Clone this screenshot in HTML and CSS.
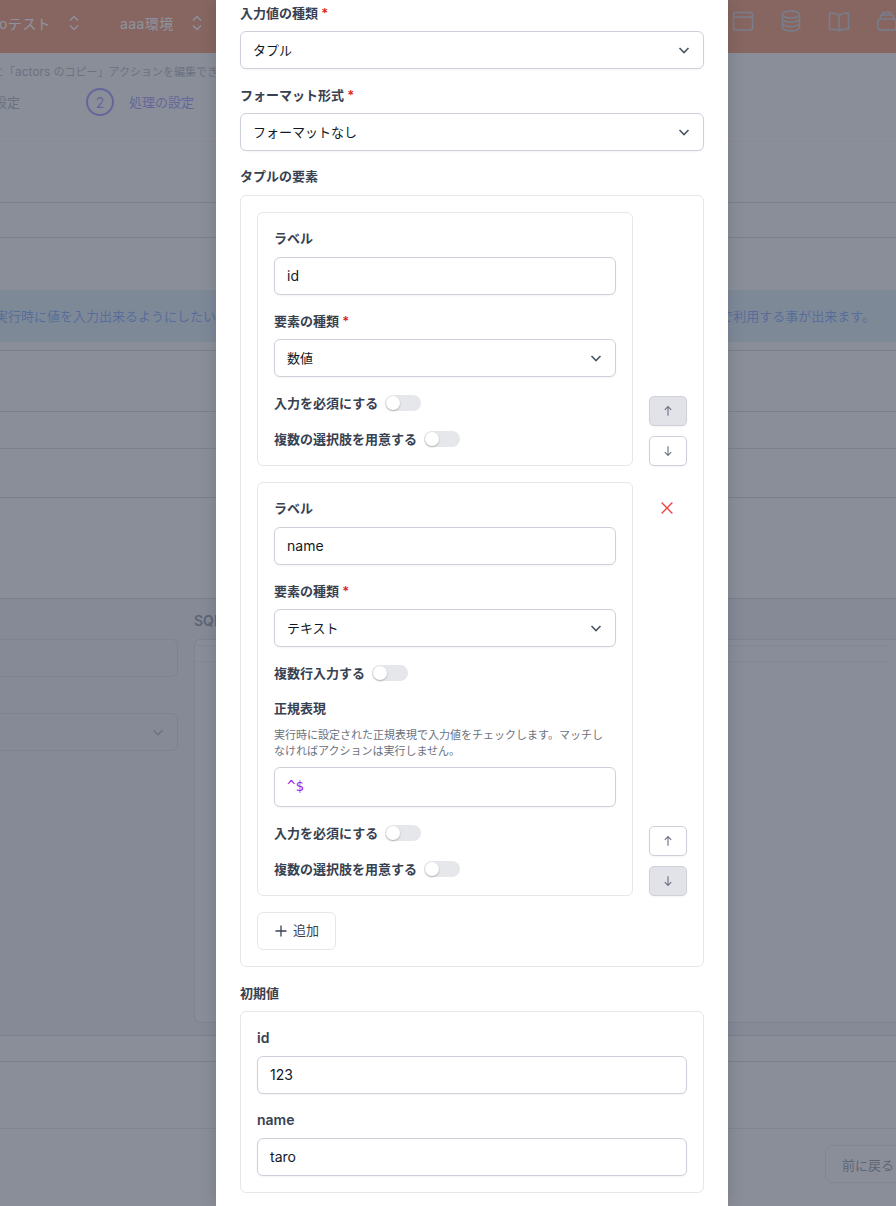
FILE: index.html
```html
<!DOCTYPE html>
<html lang="ja">
<head>
<meta charset="utf-8">
<title>アクションの編集</title>
<link rel="stylesheet" href="styles.css">
</head>
<body>
<div class="page">
  <header class="topbar">
    <div class="crumbs">
      <span class="crumb">oテスト</span>
      <svg class="updown" viewBox="0 0 20 20"><path d="M6 7.500 10 3.500l4 4M6 12.500l4 4 4-4"/></svg>
      <span class="crumb crumb-b">aaa環境</span>
      <svg class="updown" viewBox="0 0 20 20"><path d="M6 7.500 10 3.500l4 4M6 12.500l4 4 4-4"/></svg>
    </div>
    <div class="top-icons">
      <svg class="top-icon" viewBox="0 0 24 24"><rect x="2.500" y="3.500" width="19" height="17.500" rx="2.500"/><path d="M2.500 8h19M5.500 5.800h.01M7.500 5.800h.01M9.500 5.800h.01"/></svg>
      <svg class="top-icon" viewBox="0 0 24 24"><ellipse cx="12" cy="5.500" rx="8.500" ry="3.500"/><path d="M3.500 5.500v13c0 1.900 3.800 3.500 8.500 3.500s8.500-1.600 8.500-3.500v-13M3.500 9.800c0 1.900 3.800 3.500 8.500 3.500s8.500-1.600 8.500-3.500M3.500 14.200c0 1.900 3.800 3.500 8.500 3.500s8.500-1.600 8.500-3.500"/></svg>
      <svg class="top-icon" viewBox="0 0 24 24"><path d="M12 6.500c-1.800-1.500-4.500-2.500-9.500-2.500v16c5 0 7.700.6 9.500 1.800 1.800-1.200 4.500-1.800 9.500-1.800V4c-5 0-7.700 1-9.500 2.500ZM12 6.500v15.300"/></svg>
      <svg class="top-icon" viewBox="0 0 24 24"><rect x="3" y="10" width="18" height="11" rx="2.500"/><path d="M5.500 10V7.500A1.500 1.500 0 0 1 7 6h10a1.500 1.500 0 0 1 1.500 1.500V10M7.500 6V4.500a1 1 0 0 1 1-1h7a1 1 0 0 1 1 1V6"/></svg>
    </div>
  </header>
  <p class="notice">と「<span class="notice-en">actors</span> のコピー」アクションを編集でき</p>
  <div class="steps">
    <span class="step-done">設定</span>
    <span class="step-num">2</span>
    <span class="step-now">処理の設定</span>
  </div>
  <div class="bg-row bg-r1"></div>
  <div class="bg-row bg-r2"></div>
  <div class="banner"><span class="banner-l">実行時に値を入力出来るようにしたい</span><span class="banner-r">で利用する事が出来ます。</span></div>
  <div class="bg-row bg-r4"></div>
  <div class="bg-row bg-r5"></div>
  <div class="bg-row bg-r6"></div>
  <div class="bg-row bg-r7"></div>
  <div class="bg-row bg-r8"></div>
  <div class="bg-form">
    <div class="bg-left">
      <div class="bg-input"></div>
      <div class="bg-select"><svg class="bg-chev" viewBox="0 0 20 20"><path d="m5 8 5 5 5-5"/></svg></div>
    </div>
    <div class="bg-right">
      <div class="bg-sql">SQL</div>
      <div class="bg-editor"><div class="ed-line"></div><div class="ed-line"></div></div>
    </div>
  </div>
  <div class="bg-foot1"></div>
  <div class="bg-foot2"></div>
  <div class="bg-foot3"></div>
  <div class="bg-actions"><button class="bg-back">前に戻る</button></div>
</div>

<div class="overlay"></div>

<main class="modal">
  <div class="field">
    <div class="label">入力値の種類 <span class="req">*</span></div>
    <div class="ctl select">タプル<svg class="chev" viewBox="0 0 20 20"><path d="m5.500 8 4.500 4.500L14.500 8"/></svg></div>
  </div>
  <div class="field">
    <div class="label">フォーマット形式 <span class="req">*</span></div>
    <div class="ctl select">フォーマットなし<svg class="chev" viewBox="0 0 20 20"><path d="m5.500 8 4.500 4.500L14.500 8"/></svg></div>
  </div>
  <div class="label label-sec">タプルの要素</div>
  <section class="box">
    <div class="el">
      <div class="el-card">
        <div class="label">ラベル</div>
        <div class="ctl">id</div>
        <div class="label label-next">要素の種類 <span class="req">*</span></div>
        <div class="ctl select">数値<svg class="chev" viewBox="0 0 20 20"><path d="m5.500 8 4.500 4.500L14.500 8"/></svg></div>
        <div class="sw-row sw-first"><span class="label">入力を必須にする</span><span class="sw"></span></div>
        <div class="sw-row"><span class="label">複数の選択肢を用意する</span><span class="sw"></span></div>
      </div>
      <div class="el-side">
        <button class="arrow arrow-off"><svg viewBox="0 0 20 20"><path d="M10 16V4.500M6 8.500l4-4 4 4"/></svg></button>
        <button class="arrow"><svg viewBox="0 0 20 20"><path d="M10 4v11.500M6 11.500l4 4 4-4"/></svg></button>
      </div>
    </div>
    <div class="el">
      <div class="el-card">
        <div class="label">ラベル</div>
        <div class="ctl">name</div>
        <div class="label label-next">要素の種類 <span class="req">*</span></div>
        <div class="ctl select">テキスト<svg class="chev" viewBox="0 0 20 20"><path d="m5.500 8 4.500 4.500L14.500 8"/></svg></div>
        <div class="sw-row sw-first"><span class="label">複数行入力する</span><span class="sw"></span></div>
        <div class="label label-regex">正規表現</div>
        <p class="help">実行時に設定された正規表現で入力値をチェックします。マッチしなければアクションは実行しません。</p>
        <div class="ctl ctl-code"><span class="code">^$</span></div>
        <div class="sw-row sw-first"><span class="label">入力を必須にする</span><span class="sw"></span></div>
        <div class="sw-row"><span class="label">複数の選択肢を用意する</span><span class="sw"></span></div>
      </div>
      <div class="el-side el-side-del">
        <button class="del"><svg viewBox="0 0 20 20"><path d="M4 4l12 12M16 4 4 16"/></svg></button>
        <div class="arrows">
          <button class="arrow"><svg viewBox="0 0 20 20"><path d="M10 16V4.500M6 8.500l4-4 4 4"/></svg></button>
          <button class="arrow arrow-off"><svg viewBox="0 0 20 20"><path d="M10 4v11.500M6 11.500l4 4 4-4"/></svg></button>
        </div>
      </div>
    </div>
    <button class="add"><svg viewBox="0 0 20 20"><path d="M10 4.500v11M4.500 10h11"/></svg><span class="add-text">追加</span></button>
  </section>
  <div class="label label-sec label-init">初期値</div>
  <section class="box box-init">
    <div class="label label-en">id</div>
    <div class="ctl">123</div>
    <div class="label label-en label-next">name</div>
    <div class="ctl">taro</div>
  </section>
</main>
</body>
</html>
```

FILE: styles.css
```css
* { box-sizing: border-box; }
html, body { margin: 0; height: 1206px; overflow: hidden; }
body {
  position: relative;
  background: #fff;
  font-family: Inter, "Noto Sans CJK JP", sans-serif;
  color: #374151;
}
button { font-family: inherit; }

.page { height: 1206px; overflow: hidden; background: #e7e2e4; color: #374151; font-size: 13px; }
.topbar { height: 53px; background: #db4604; display: flex; justify-content: space-between; align-items: center; color: #f3f4f6; overflow: hidden; }
.crumbs { display: flex; align-items: center; padding-bottom: 8px; font-size: 14px; letter-spacing: .4px; }
.crumb { white-space: nowrap; }
.crumb:first-child { margin-left: -1px; }
.crumb-b { margin-left: 36px; }
.updown { width: 20px; height: 20px; margin-left: 13px; fill: none; stroke: #f3f4f6; stroke-width: 1.300; }
.top-icons { display: flex; gap: 24px; margin-right: -3px; padding-bottom: 11px; }
.top-icon { width: 24px; height: 24px; fill: none; stroke: #9ca3af; stroke-width: 1.500; }
.notice { margin: 0; height: 35px; padding: 10px 0 0; font-size: 11px; line-height: 18px; color: #6b7280; white-space: nowrap; text-indent: -7px; }
.notice-en { font-size: 12px; }
.steps { height: 54px; display: flex; align-items: flex-start; font-size: 13px; border-bottom: 1px solid #dcd8dc; }
.step-done { color: #6b7280; line-height: 28px; margin-left: -6px; width: 92px; }
.step-num { width: 28px; height: 28px; border: 2px solid #4f46e5; border-radius: 50%; color: #4f46e5; display: flex; align-items: center; justify-content: center; font-size: 14px; }
.step-now { margin-left: 15px; color: #4f46e5; line-height: 28px; }
.bg-row { border-bottom: 1px solid #b0adb5; }
.bg-r1 { height: 61px; }
.bg-r2 { height: 35px; }
.banner { height: 52px; margin-top: 52px; background: #b9cdde; color: #1d5fe0; font-size: 13px; line-height: 52px; display: flex; justify-content: space-between; padding-right: 21px; white-space: nowrap; }
.banner-l { margin-left: -5px; }
.bg-r4 { height: 9px; }
.bg-r5 { height: 61px; }
.bg-r6 { height: 37px; }
.bg-r7 { height: 49px; }
.bg-r8 { height: 101px; }
.bg-form { height: 424px; display: flex; background: #d3d2d8; }
.bg-left { width: 178px; padding-top: 40px; flex-shrink: 0; }
.bg-input, .bg-select { height: 38px; border: 1px solid #b8b6c0; border-left: 0; border-radius: 0 6px 6px 0; }
.bg-select { margin-top: 36px; display: flex; align-items: center; justify-content: flex-end; padding-right: 10px; }
.bg-chev { width: 18px; height: 18px; fill: none; stroke: #6b7280; stroke-width: 1.500; }
.bg-right { margin-left: 16px; flex: 1; }
.bg-sql { font-size: 14px; font-weight: 600; line-height: 20px; padding-top: 12px; height: 40px; color: #374151; }
.bg-editor { height: 384px; background: #e0dfe3; border: 1px solid #b8b6c0; border-right: 0; border-radius: 6px 0 0 6px; }
.ed-line { height: 0; border-bottom: 1px solid #c9c7ce; margin-top: 5px; margin-right: 8px; }
.ed-line + .ed-line { margin-top: 15px; }
.bg-foot1 { height: 13px; background: #d3d2d8; border-bottom: 1px solid #b0adb5; }
.bg-foot2 { height: 26px; border-bottom: 1px solid #b0adb5; }
.bg-foot3 { height: 67px; border-bottom: 1px solid #c4c1c8; }
.bg-actions { padding: 16px 0 0 825px; }
.bg-back { width: 90px; height: 38px; background: transparent; border: 1px solid #c0bec6; border-radius: 6px; color: #374151; font-size: 13px; text-align: left; padding-left: 16px; white-space: nowrap; }

.overlay { position: absolute; inset: 0; background: rgba(107, 114, 128, .75); }

.modal { position: absolute; top: 0; left: 216px; width: 512px; height: 1206px; background: #fff; padding: 4px 24px 0; overflow: hidden; box-shadow: 0 0 16px rgba(0, 0, 0, .14); }
.label { font-size: 13px; font-weight: 600; line-height: 18px; color: #374151; }
.label-en { font-size: 14px; }
.req { color: #dc2626; }
.field { height: 82px; }
.ctl {
  margin-top: 9px; height: 38px; border: 1px solid #cfd0da; border-radius: 6px; background: #fff;
  box-shadow: 0 1px 2px rgba(0,0,0,.05); padding: 0 12px; font-size: 14px; line-height: 36px; color: #111827;
}
.select { display: flex; justify-content: space-between; align-items: center; padding-right: 9px; font-size: 13px; }
.chev { width: 20px; height: 20px; fill: none; stroke: #4b5563; stroke-width: 1.600; }
.label-sec { margin-top: -1px; }
.box { margin-top: 10px; border: 1px solid #e5e7eb; border-radius: 6px; padding: 16px; }
.el { display: flex; margin-bottom: 16px; }
.el-card { width: 376px; border: 1px solid #e5e7eb; border-radius: 6px; padding: 16px 16px 17px; flex-shrink: 0; }
.el-card > .label:first-child + .ctl { margin-top: 10px; }
.label-next { margin-top: 17px; }
.sw-row { display: flex; align-items: center; gap: 7px; height: 18px; margin-top: 18px; }
.sw-first { margin-top: 17px; }
.sw { position: relative; width: 36px; height: 16px; background: #e5e7eb; border-radius: 8px; }
.sw::after { content: ""; position: absolute; left: 1px; top: 1px; width: 14px; height: 14px; background: #fff; border-radius: 50%; box-shadow: 0 1px 2px rgba(0,0,0,.25); }
.el-side { flex: 1; display: flex; flex-direction: column; justify-content: flex-end; align-items: flex-end; gap: 10px; }
.el-side-del { justify-content: space-between; }
.arrows { display: flex; flex-direction: column; gap: 10px; }
.arrow { width: 38px; height: 30px; padding: 0; background: #fff; border: 1px solid #cfd0da; border-radius: 5px; box-shadow: 0 1px 2px rgba(0,0,0,.05); display: flex; align-items: center; justify-content: center; }
.arrow svg { width: 16px; height: 16px; fill: none; stroke: #6b7280; stroke-width: 1.400; }
.arrow-off { background: #e2e3e9; }
.del { width: 38px; height: 30px; padding: 0; margin: 11px 1px 0 0; background: none; border: 0; display: flex; align-items: center; justify-content: center; }
.del svg { width: 18px; height: 18px; fill: none; stroke: #ef4444; stroke-width: 1.500; }
.label-regex { margin-top: 17px; }
.help { margin: 10px 0 0; padding-right: 8px; font-size: 11px; line-height: 16px; color: #6b7280; }
.ctl-code { height: 40px; margin-top: 8px; line-height: 36px; }
.code { color: #a020f0; font-family: "DejaVu Sans Mono", "Liberation Mono", monospace; font-size: 14px; }
.add { display: flex; align-items: center; gap: 2px; width: 79px; height: 38px; background: #fff; border: 1px solid #e5e7eb; border-radius: 6px; color: #374151; font-size: 13px; line-height: 18px; padding: 0 0 0 13px; }
.add svg { width: 20px; height: 20px; fill: none; stroke: #374151; stroke-width: 1.300; }
.add-text { margin-top: -2px; }
.label-init { margin-top: 17px; }
.box-init { margin-top: 9px; padding: 17px 16px 16px; }
```
